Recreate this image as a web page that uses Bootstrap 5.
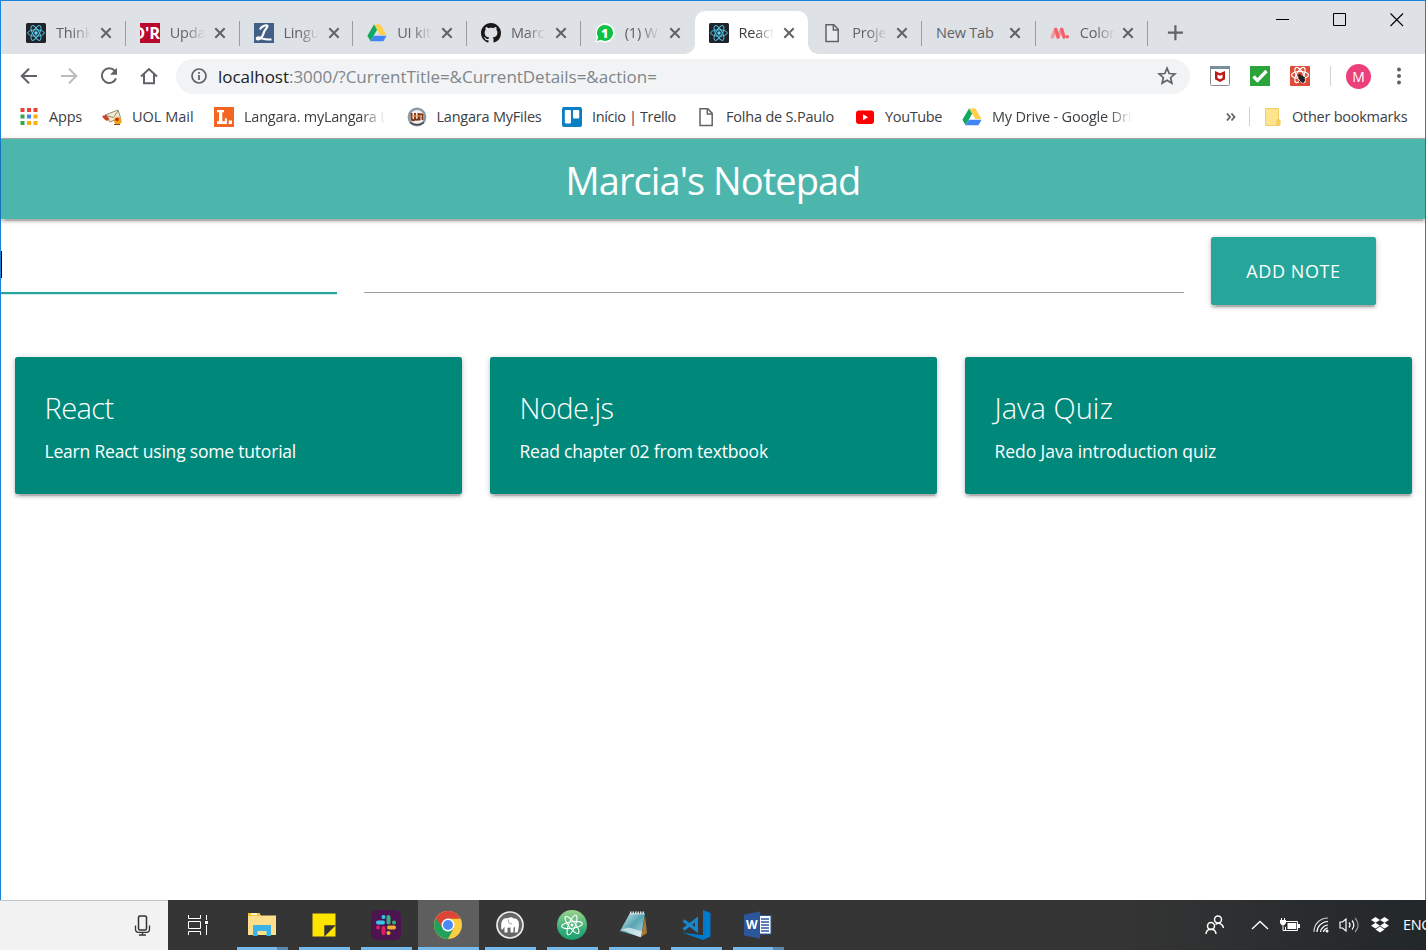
<!DOCTYPE html>
<html lang="en">
<head>
<meta charset="utf-8">
<meta name="viewport" content="width=device-width, initial-scale=1">
<title>Marcia's Notepad</title>
<link href="https://cdn.jsdelivr.net/npm/bootstrap@5.3.0/dist/css/bootstrap.min.css" rel="stylesheet">
<style>
body{font-family:"Open Sans","Noto Sans",sans-serif;height:950px;overflow:hidden;background:#fff}
svg{display:block;flex:none}
.window{height:900px;border:1px solid #1883d7;border-bottom:0}
/* tab strip */
.tabs-strip{height:53px;background:#dee1e6;padding:10px 0 0 11px}
.tab{width:113.75px;height:43px;padding-left:14px;flex:none;position:relative;font-size:14.5px;letter-spacing:-.2px;color:#5f6368}
.tab .label{width:35px;margin-left:10px;overflow:hidden;white-space:nowrap;line-height:24px;-webkit-mask-image:linear-gradient(90deg,#000 45%,transparent);mask-image:linear-gradient(90deg,#000 45%,transparent)}
.tab .label.full{width:68px;margin-left:0;-webkit-mask:none;mask:none}
.tab .x{margin-left:9px}
.tab.full-tab .x{margin-left:4.500px}
.tab.last{width:112px}
.tab.last .x{margin-left:7px}
.tab.sep::after{content:"";position:absolute;right:0;top:10px;width:1px;height:25px;background:#9a9da1}
.tab.on{background:#fff;border-radius:10px 10px 0 0;color:#3c4043}
.tab.on::before,.tab.on::after{content:"";position:absolute;bottom:0;width:10px;height:10px}
.tab.on::before{left:-10px;background:radial-gradient(circle at 0 0,transparent 9.5px,#fff 10px)}
.tab.on::after{right:-10px;background:radial-gradient(circle at 100% 0,transparent 9.5px,#fff 10px)}
.win-ctl{gap:43px;margin-right:21px;margin-top:2px}
/* toolbar */
.toolbar{height:44px;padding-left:18px}
.omni{width:1014px;height:35px;border-radius:18px;background:#f1f3f4;font-size:17px;color:#80868b;padding:0 13px;margin-left:17px}
.omni .url{margin-left:9px;letter-spacing:-.03px;white-space:nowrap;padding-top:1px}
.omni b{font-weight:400;color:#202124}
.ext{margin-left:20px}
.vr-line{width:1px;height:20px;background:#cfd1d4;margin:0 15px 0 20px}
.avatar{width:25px;height:25px;background:#ec407a;color:#fff;font:14px "Open Sans",sans-serif;margin-right:25px}
.dots{margin-right:23px}
/* bookmarks */
.marks{height:41px;border-bottom:1px solid #b1b1b1;padding:0 18px 3px 18px;font-size:14.5px;color:#3c4043}
.bm{gap:10px;margin-right:20px}
.bm span{white-space:nowrap;line-height:24px}
.bm .fade-end{overflow:hidden;-webkit-mask-image:linear-gradient(90deg,#000 82%,transparent 99%);mask-image:linear-gradient(90deg,#000 82%,transparent 99%)}
.marks-rule{width:1px;height:19px;background:#cfd1d4;margin:0 14px 0 13px}
/* page */
.z1{box-shadow:0 2.5px 2.5px 0 rgba(0,0,0,.14),0 4px 1px -2.5px rgba(0,0,0,.12),0 1px 6px 0 rgba(0,0,0,.2)}
.brandbar{height:80px;background:#4db6ac}
.brandbar h1{font-size:38px;line-height:80px;margin:0;padding-top:1px;letter-spacing:-.95px}
.note-form{padding-top:18px;height:138px;gap:27px}
.line-input{height:56px;border:0;border-bottom:1px solid #9e9e9e;border-radius:0;padding:0}
.line-input.cur{border-bottom:2px solid #26a69a;height:57px;box-shadow:0 .6px 0 #26a69a55}
.caret{position:absolute;left:0;top:14px;width:1px;height:27px;background:#000}
.btn-add{width:165px;height:68px;background:#26a69a;color:#fff;border:0;border-radius:2.5px;font-size:18px;letter-spacing:.6px;padding:0}
.note{height:137px;width:447px;background:#00897b;color:#fff;border:0;border-radius:2.5px;padding:30px 29.5px}
.note h2{font-size:29px;font-weight:300;line-height:42px;margin:0;letter-spacing:-.6px}
.note p{font-size:17.5px;line-height:28px;margin:8px 0 0;letter-spacing:-.2px;white-space:nowrap}
/* taskbar */
.taskbar{height:50px;background:#353535;overflow:hidden}
.search{width:168px;background:#f2f2f2;border-top:1px solid #c4c4c4;padding-right:17px}
.task{width:62px;height:50px;position:relative}
.task::after{content:"";position:absolute;left:6px;right:5px;bottom:0;height:3px;background:#76b9ed}
.task.on{background:linear-gradient(90deg,#353535 1px,#5e5e5e 1px)}
.task.on::after{left:1px;right:0}
.task.multi::after{background:linear-gradient(90deg,#76b9ed 40px,#5c87ab 40px)}
.tray{background:linear-gradient(90deg,#353535 50%,#22272a)}
</style>
</head>
<body>
<svg width="0" height="0" class="position-absolute">
  <symbol id="close" viewBox="0 0 12 12"><path d="M1.3 1.3l9.4 9.4M10.7 1.3l-9.4 9.4" stroke="#5f6368" stroke-width="2"/></symbol>
  <symbol id="react" viewBox="0 0 20 20"><rect width="20" height="20" rx="1.5" fill="#20232a"/><g fill="none" stroke="#53c1de" stroke-width="1"><ellipse cx="10" cy="10" rx="8.3" ry="3.2"/><ellipse cx="10" cy="10" rx="8.3" ry="3.2" transform="rotate(60 10 10)"/><ellipse cx="10" cy="10" rx="8.3" ry="3.2" transform="rotate(120 10 10)"/></g><circle cx="10" cy="10" r="1.7" fill="#61dafb"/></symbol>
  <symbol id="drive" viewBox="0 0 20 20"><path d="M7 1.4h6.3l6.2 10.7h-6.3z" fill="#ffcf48"/><path d="M7 1.4l3.1 5.4-6.5 11.4L.4 12.7z" fill="#11a861"/><path d="M6.8 12.7h12.8l-3.2 5.5H3.6z" fill="#4285f4"/></symbol>
  <symbol id="page" viewBox="0 0 20 20"><path d="M4 1.8h7.8l4.400 4.600v12H4z" fill="#fff" fill-opacity=".3" stroke="#5f6368" stroke-width="1.5"/><path d="M11.300 2v5h4.800" fill="none" stroke="#5f6368" stroke-width="1.4"/></symbol>
</svg>

<div class="window d-flex flex-column">
  <div class="tabs-strip d-flex">
    <div class="tab sep d-flex align-items-center"><svg width="20" height="20"><use href="#react"/></svg><span class="label">Thinking</span><svg class="x" width="12" height="12"><use href="#close"/></svg></div>
    <div class="tab sep d-flex align-items-center"><svg width="20" height="20"><rect width="20" height="20" fill="#b8082d"/><text x="-7" y="15.500" font-family="Open Sans" font-weight="700" font-size="16.500" fill="#fff">D'R</text></svg><span class="label">Update</span><svg class="x" width="12" height="12"><use href="#close"/></svg></div>
    <div class="tab sep d-flex align-items-center"><svg width="20" height="20"><rect width="20" height="20" fill="#425f85"/><path d="M6 6.500C7 3.500 12 1.500 13.300 2.600c1 1.500-2.300 3.400-3.300 6.400-.8 3-1.500 6-5 7.300-2 .5-3.200-1.300-1.200-1.800 3-.5 6 3 13.700 1.800" fill="none" stroke="#fff" stroke-width="2.200"/></svg><span class="label">Linguee</span><svg class="x" width="12" height="12"><use href="#close"/></svg></div>
    <div class="tab sep d-flex align-items-center"><svg width="20" height="20"><use href="#drive"/></svg><span class="label">UI kit -</span><svg class="x" width="12" height="12"><use href="#close"/></svg></div>
    <div class="tab sep d-flex align-items-center"><svg width="20" height="20" viewBox="0 0 16 16"><path fill="#191717" d="M8 0C3.580 0 0 3.580 0 8c0 3.540 2.290 6.530 5.470 7.590.4.070.55-.17.55-.38 0-.19-.01-.82-.01-1.490-2.010.37-2.530-.49-2.690-.94-.09-.23-.48-.94-.82-1.130-.28-.15-.68-.52-.01-.53.63-.01 1.080.58 1.230.82.72 1.210 1.870.87 2.330.66.070-.52.28-.87.51-1.070-1.780-.2-3.640-.89-3.640-3.950 0-.87.31-1.590.82-2.150-.08-.2-.36-1.020.08-2.120 0 0 .67-.21 2.200.82.64-.18 1.320-.27 2-.27s1.360.09 2 .27c1.530-1.040 2.200-.82 2.200-.82.44 1.100.16 1.920.08 2.120.51.56.82 1.270.82 2.150 0 3.070-1.870 3.750-3.650 3.950.29.25.54.73.54 1.480 0 1.070-.01 1.930-.01 2.200 0 .21.15.46.55.38A8.010 8.010 0 0 0 16 8c0-4.420-3.580-8-8-8z"/></svg><span class="label">Marcia</span><svg class="x" width="12" height="12"><use href="#close"/></svg></div>
    <div class="tab d-flex align-items-center"><svg width="20" height="20"><path d="M10 .3a9.600 9.600 0 1 1-4.500 18L.5 19.600l1.300-5A9.600 9.600 0 0 1 10 .3z" fill="#fff"/><path d="M10 1.900a8 8 0 1 1-4.200 14.800L2 17.900l1.200-3.800A8 8 0 0 1 10 1.900z" fill="#0dc143"/><text x="6" y="14.500" font-family="Open Sans" font-weight="800" font-size="12.500" fill="#fff">1</text></svg><span class="label">(1) WhatsApp</span><svg class="x" width="12" height="12"><use href="#close"/></svg></div>
    <div class="tab on d-flex align-items-center"><svg width="20" height="20"><use href="#react"/></svg><span class="label">React App</span><svg class="x" width="12" height="12"><use href="#close"/></svg></div>
    <div class="tab sep d-flex align-items-center"><svg width="20" height="20"><use href="#page"/></svg><span class="label">Project</span><svg class="x" width="12" height="12"><use href="#close"/></svg></div>
    <div class="tab sep full-tab d-flex align-items-center"><span class="label full">New Tab</span><svg class="x" width="12" height="12"><use href="#close"/></svg></div>
    <div class="tab sep last d-flex align-items-center"><svg width="20" height="20"><g stroke-linecap="round" stroke-width="3.400"><path d="M2.300 14L5.500 6.500M8 14l3.500-7.500" stroke="#f5999d"/><path d="M5.800 6.500L8 14M11.800 6.500L14 14" stroke="#f4606a"/></g><circle cx="17.300" cy="13.800" r="1.800" fill="#f4606a"/></svg><span class="label">Color Tool</span><svg class="x" width="12" height="12"><use href="#close"/></svg></div>
    <svg class="ms-3 mt-2" width="26" height="26"><path d="M11.400 6.200v15M3.900 13.700h15" stroke="#5f6368" stroke-width="2.200"/></svg>
    <div class="win-ctl d-flex ms-auto">
      <svg width="14" height="14"><path d="M0 6.500h13" stroke="#000"/></svg>
      <svg width="14" height="14"><path d="M.5.500h12v12H.500z" fill="none" stroke="#000" /></svg>
      <svg width="14" height="14"><path d="M.5.500l12.500 12.500M13 .5L.5 13" stroke="#000" stroke-width="1.100"/></svg>
    </div>
  </div>

  <div class="toolbar d-flex align-items-center">
    <div class="d-flex" style="gap:20px">
      <svg width="20" height="20"><path d="M18 10H3M10 2.700L2.700 10l7.300 7.300" fill="none" stroke="#5f6368" stroke-width="2"/></svg>
      <svg width="20" height="20"><path d="M2 10h15M10 2.700l7.300 7.300-7.300 7.300" fill="none" stroke="#babcbe" stroke-width="2"/></svg>
      <svg width="20" height="20"><path d="M15.800 5A7.300 7.300 0 1 0 17 12.300" fill="none" stroke="#5f6368" stroke-width="2"/><path d="M18 1.700v7h-7z" fill="#5f6368"/></svg>
      <svg width="20" height="20"><path d="M2 10.500L10 3l8 7.500M5 8.500v8.700h10V8.500" fill="none" stroke="#5f6368" stroke-width="2"/></svg>
    </div>
    <div class="omni d-flex align-items-center">
      <svg width="20" height="20"><circle cx="10" cy="10" r="7" fill="none" stroke="#5f6368" stroke-width="1.700"/><path d="M10 9v5M10 6v1.800" stroke="#5f6368" stroke-width="1.800"/></svg>
      <span class="url"><b>localhost</b>:3000/?CurrentTitle=&amp;CurrentDetails=&amp;action=</span>
      <svg class="ms-auto" width="20" height="20"><path d="M10 2.200l2.200 5.300 5.700.5-4.300 3.700 1.300 5.600-4.900-3-4.900 3 1.300-5.600L2.100 8l5.700-.5z" fill="none" stroke="#5f6368" stroke-width="1.700"/></svg>
    </div>
    <div class="d-flex align-items-center ms-auto">
      <svg width="20" height="20"><rect x=".5" y=".5" width="19" height="19" rx="1" fill="#fff" stroke="#8b8e90"/><path d="M0 0h20v3H0z" fill="#78909c"/><path d="M5 5l5 2.200L15 5v8.200L10 16l-5-2.800z" fill="#c01818"/><path d="M7.500 8.400l2.500 1.300 2.500-1.300v3.600L10 13.200 7.500 12z" fill="#fff"/></svg>
      <svg width="20" height="20" class="ext"><rect width="20" height="20" fill="#2aa43b"/><path d="M3.500 10.500l4 4L16.500 5" fill="none" stroke="#fff" stroke-width="3.300"/></svg>
      <svg width="20" height="20" class="ext"><rect width="20" height="20" rx="1" fill="#dd4b39"/><g fill="none" stroke="#fff" stroke-width="1.200"><ellipse cx="10" cy="9" rx="8.500" ry="3.500"/><ellipse cx="10" cy="9" rx="8.500" ry="3.500" transform="rotate(60 10 9)"/><ellipse cx="10" cy="9" rx="8.500" ry="3.500" transform="rotate(120 10 9)"/></g><ellipse cx="12" cy="13" rx="2.600" ry="3.600" fill="#222" transform="rotate(-35 12 13)"/><path d="M8 12l7 2.500M9 16l6-5M13 17v-7" stroke="#222"/><circle cx="9.500" cy="9.500" r="1.500" fill="#222"/></svg>
      <div class="vr-line"></div>
      <div class="avatar rounded-circle d-flex align-items-center justify-content-center">M</div>
      <svg width="6" height="20" class="dots"><g fill="#5f6368"><circle cx="3" cy="3.500" r="2"/><circle cx="3" cy="10" r="2"/><circle cx="3" cy="16.500" r="2"/></g></svg>
    </div>
  </div>

  <div class="marks d-flex align-items-center">
    <div class="bm d-flex align-items-center"><svg width="20" height="20"><g fill="#ea4335"><path d="M1.500 1h4v4h-4zM8 1h4v4H8zM14.500 1h4v4h-4z"/></g><path d="M1.500 7.500h4v4h-4zM1.500 14h4v4h-4z" fill="#34a853"/><path d="M8 7.500h4v4H8z" fill="#4285f4"/><path d="M14.500 7.500h4v4h-4zM8 14h4v4H8zM14.500 14h4v4h-4z" fill="#fbaf05"/></svg><span style="width:33px;letter-spacing:-.2px">Apps</span></div>
    <div class="bm d-flex align-items-center"><svg width="20" height="20"><path d="M3 8L16 3l2.500 7.500L8 15z" fill="#f2ead0" stroke="#8a8264" stroke-width=".9"/><path d="M4 8.500l7.500 2L16 4" fill="none" stroke="#8a8264" stroke-width=".9"/><path d="M0 9l4-1 3.500 4L5 14l-3-2z" fill="#c9452b"/><circle cx="15.800" cy="13.800" r="3.800" fill="#eda619"/><circle cx="15" cy="12.500" r="1.800" fill="#cf2418"/><path d="M12 17.500h6" stroke="#7b4d10"/></svg><span style="width:62px">UOL Mail</span></div>
    <div class="bm d-flex align-items-center"><svg width="20" height="20"><rect width="20" height="20" fill="#f36621"/><path d="M3 3h7v2.300H8.300v9h2.600v-3h2V17H3v-2.700h2V5.300H3zM14.700 13.500H18V17h-3.300z" fill="#fff"/></svg><span class="fade-end" style="width:142.500px;letter-spacing:-.25px">Langara. myLangara Login</span></div>
    <div class="bm d-flex align-items-center"><svg width="20" height="20"><circle cx="10" cy="10" r="8.200" fill="#f2efed" stroke="#8d9aa8" stroke-width="2.400"/><path d="M4.500 6v5c0 3 3.500 3 3.500 0V6M8 11c1 3 3.500 2 3.500 0V6M15.500 13V7.500c-2-1-3 0-3 2v4" fill="none" stroke="#7a3517" stroke-width="1.900"/><path d="M5 9h10" stroke="#ef9b43" stroke-width="1.200"/><path d="M3 15.500c4 3 10 3 14 0" fill="none" stroke="#444" stroke-width="1.500"/></svg><span style="width:105.500px;letter-spacing:-.22px">Langara MyFiles</span></div>
    <div class="bm d-flex align-items-center"><svg width="20" height="20"><rect width="20" height="20" rx="2" fill="#0b7fc4"/><rect x="2.800" y="3" width="6.200" height="13.500" rx="1" fill="#fff"/><rect x="11" y="3" width="6.200" height="8.500" rx="1" fill="#fff"/></svg><span style="width:84px;letter-spacing:-.38px">Início | Trello</span></div>
    <div class="bm d-flex align-items-center"><svg width="20" height="20"><use href="#page"/></svg><span style="width:109px;letter-spacing:-.2px">Folha de S.Paulo</span></div>
    <div class="bm d-flex align-items-center"><svg width="20" height="20"><rect x="1" y="3.500" width="18" height="13.500" rx="3" fill="#f00"/><path d="M8 7.300l5 3-5 3z" fill="#fff"/></svg><span style="width:57px;letter-spacing:-.35px">YouTube</span></div>
    <div class="bm d-flex align-items-center"><svg width="20" height="20"><use href="#drive"/></svg><span class="fade-end" style="width:142px;letter-spacing:-.2px">My Drive - Google Drive</span></div>
    <svg class="ms-auto" width="10" height="10"><path d="M1 1.500l3 3.500-3 3.500M5.500 1.500l3 3.500-3 3.500" fill="none" stroke="#5f6368" stroke-width="1.800"/></svg>
    <div class="marks-rule"></div>
    <svg width="18" height="20"><path d="M1.500 1.500h13v17h-13z" fill="#fde48d" stroke="#f0cf66"/><path d="M13 13h3v5h-3z" fill="#f9d656" stroke="#edc84f"/></svg>
    <span style="margin-left:10px;width:115px;letter-spacing:-.25px;white-space:nowrap">Other bookmarks</span>
  </div>

  <nav class="brandbar z1 text-white text-center"><h1 class="fw-normal">Marcia's Notepad</h1></nav>
  <form class="note-form d-flex align-items-start">
    <div class="position-relative" style="width:336px"><input class="form-control line-input cur" type="text" aria-label="Title"><i class="caret"></i></div>
    <input class="form-control line-input" style="width:820px" type="text" aria-label="Details">
    <button class="btn btn-add z1" type="button">ADD NOTE</button>
  </form>
  <main class="d-flex" style="gap:28px;padding-left:14px">
    <div class="card note z1"><h2>React</h2><p>Learn React using some tutorial</p></div>
    <div class="card note z1"><h2>Node.js</h2><p>Read chapter 02 from textbook</p></div>
    <div class="card note z1"><h2 style="letter-spacing:.05px">Java Quiz</h2><p style="letter-spacing:-.06px">Redo Java introduction quiz</p></div>
  </main>
</div>

<footer class="taskbar d-flex">
  <div class="search d-flex align-items-center justify-content-end"><svg width="17" height="22"><rect x="4.500" y="1" width="8" height="14" rx="1.500" fill="none" stroke="#333" stroke-width="1.500"/><path d="M1.500 10.500v3.500c0 2 1 3.300 3 3.300h8c2 0 3-1.300 3-3.300v-3.500M8.500 17.500v3M5 20h7" fill="none" stroke="#333" stroke-width="1.300"/></svg></div>
  <div class="d-flex align-items-center justify-content-center" style="width:63px;padding-right:3px"><svg width="22" height="20"><path d="M1.500 0v3.500h12V0M1.500 20v-3.500h12V20M1.500 6.500h12v7h-12zM19.500 0v5M19.500 10v10" fill="none" stroke="#fff"/><path d="M18 6h3v3h-3z" fill="#fff"/></svg></div>
  <div class="task multi d-flex align-items-center justify-content-center"><svg width="28" height="26"><path d="M0 2.500L1 1h10l2 2.500h15V23H0z" fill="#fddf8b"/><path d="M0 1h12v3H0z" fill="#f8c332"/><path d="M3 2.200h6" stroke="#fff" stroke-width="1.600"/><path d="M5 24V13h18v11h-4.500v-5h-9v5z" fill="#3ab3e8"/></svg></div>
  <div class="task d-flex align-items-center justify-content-center"><svg width="24" height="25"><path d="M.5.500h23v12h-11v11H.5z" fill="#ffe400"/><path d="M12.500 12.500h11l-11 11z" fill="#333"/><path d="M23.500 12.500v11h-11z" fill="#ffe400"/></svg></div>
  <div class="task d-flex align-items-center justify-content-center"><svg width="30" height="30"><rect width="30" height="30" rx="6" fill="#4c154f"/><g stroke-width="4" stroke-linecap="round"><path d="M7 12.500h5" stroke="#36c5f0"/><path d="M17.500 7v5.500" stroke="#2eb67d"/><path d="M18 17.500h5" stroke="#ecb22e"/><path d="M12.500 18v5" stroke="#e01e5a"/></g><g><circle cx="12.500" cy="7" r="2" fill="#36c5f0"/><circle cx="23" cy="12.500" r="2" fill="#2eb67d"/><circle cx="17.500" cy="23" r="2" fill="#ecb22e"/><circle cx="7" cy="17.500" r="2" fill="#e01e5a"/></g></svg></div>
  <div class="task on d-flex align-items-center justify-content-center"><svg width="28" height="28" viewBox="-14 -14 28 28"><circle r="14" fill="#fccd43"/><path d="M0 0L-12.100-7A14 14 0 0 0 0 14L5.600 3.200z" fill="#21a15b"/><path d="M-12.100-7A14 14 0 0 1 12.500-6.300H0L-5.600 3z" fill="#dc4437"/><circle r="6.500" fill="#fff"/><circle r="5" fill="#4a8af4"/></svg></div>
  <div class="task d-flex align-items-center justify-content-center"><svg width="28" height="28"><circle cx="14" cy="14" r="13" fill="#666" stroke="#eee" stroke-width="1.700"/><path d="M5.300 17.500C4.500 10 7 6.500 11.500 7.300c2-1.300 5-1.300 6 .2 4-.8 6 3 5.300 7.500-.2 3-.8 5-1.300 6.500h-2.700l.2-6-1.500 1.500v4.500h-3v-5l-3 .2v4.800H8.500v-6l-1.500 2.500c-.5 1-1.500 1-1.700-.5z" fill="#fff"/><path d="M12.500 8.500c-.5 3 .5 4.500 3.500 4.500" stroke="#888" stroke-width=".8" fill="none"/></svg></div>
  <div class="task d-flex align-items-center justify-content-center"><svg width="30" height="30"><defs><linearGradient id="atom" x2="0" y2="1"><stop stop-color="#9cd28c"/><stop offset=".65" stop-color="#36ad78"/><stop offset="1" stop-color="#16a06f"/></linearGradient></defs><circle cx="15" cy="15" r="15" fill="url(#atom)"/><g fill="none" stroke="#fff" stroke-width="1.100"><ellipse cx="15" cy="15" rx="10.500" ry="3.300" transform="rotate(-8 15 15)"/><ellipse cx="15" cy="15" rx="10.500" ry="3.300" transform="rotate(52 15 15)"/><ellipse cx="15" cy="15" rx="10.500" ry="3.300" transform="rotate(112 15 15)"/></g><circle cx="15" cy="15" r="1.500" fill="#fff"/></svg></div>
  <div class="task d-flex align-items-center justify-content-center"><svg width="30" height="30"><defs><linearGradient id="pad" x2="1" y2="1"><stop stop-color="#d7edf0"/><stop offset=".5" stop-color="#58a5b3"/><stop offset="1" stop-color="#b6dfe6"/></linearGradient></defs><path d="M26 6l2 17-6 4z" fill="#a77a35"/><path d="M11 3h15l-4 24L1 21z" fill="url(#pad)"/><path d="M2 19.500l8-2 13 4-1.500 6z" fill="#e8f4f5" opacity=".7"/><path d="M11 3h15" stroke="#ddd" stroke-width="3" stroke-dasharray="1.500 1"/></svg></div>
  <div class="task d-flex align-items-center justify-content-center"><svg width="30" height="30"><path d="M22 0l7.500 3v23.500L22 30 1 22.500l21 2.700z" fill="#007acc"/><path d="M2.500 10.500l13 9.500V9.500L2.500 19.500" fill="none" stroke="#1687cf" stroke-width="3"/></svg></div>
  <div class="task multi d-flex align-items-center justify-content-center"><svg width="28" height="28"><path d="M15 4.500h12v18.500H15z" fill="#fff" stroke="#2b579a"/><path d="M17 8h8M17 11h8M17 14h8M17 17h8M17 20h8" stroke="#2b579a" stroke-width="1.300"/><path d="M0 3.500L16 .5v27L0 24.500z" fill="#2b579a"/><text x="2" y="18" font-family="Open Sans" font-weight="700" font-size="12" fill="#fff">W</text></svg></div>
  <div class="tray d-flex align-items-center flex-grow-1 text-white">
    <svg class="ms-auto" width="20" height="20"><g fill="none" stroke="#fff" stroke-width="1.500"><circle cx="13" cy="4.500" r="3.500"/><circle cx="6" cy="11" r="3.500"/><path d="M1 19c.3-6.500 9.700-6.500 10 0M10.500 9.500c3.500-2.500 7.500-.5 8 3.500"/></g></svg>
    <svg width="18" height="10" style="margin-left:26px"><path d="M1 9l8-7.500L17 9" fill="none" stroke="#fff" stroke-width="1.400"/></svg>
    <svg width="20" height="14" style="margin-left:11px"><path d="M5 3.500h12.500v9h-12V9" fill="none" stroke="#fff"/><path d="M7.500 5h8.800v6H7.500zM18 6h2v4h-2z" fill="#fff"/><path d="M1.500 0v2M4.500 0v2M3 7v5.500h3" stroke="#fff" fill="none"/><path d="M0 2h6v3L4.500 7h-3L0 5z" fill="#fff"/></svg>
    <svg width="16" height="16" style="margin-left:13px"><g fill="none" stroke="#fff" stroke-width="1.200"><path d="M1 15C1 7 7 1 15 1" opacity=".75"/><path d="M4 15C4 9.500 9 4.500 15 4.500M7.500 15c0-3.500 4-7 7.500-7M10.500 15c0-2 2.500-4 4.500-4"/></g><circle cx="14" cy="14" r="1.500" fill="#fff"/></svg>
    <svg width="21" height="18" style="margin-left:10px"><g fill="none" stroke="#fff" stroke-width="1.200"><path d="M1 6h2.500L7 3v12l-3.500-3H1z"/><path d="M10 6.500c1.300 1.500 1.300 3.500 0 5M13 4.500c2.500 3 2.500 6 0 9"/><path d="M16 2c4 4.500 4 9.500 0 14" opacity=".5"/></g></svg>
    <svg width="18" height="16" style="margin-left:11px"><path d="M4.500 0L9 2.900 4.500 5.800 0 2.900zM13.500 0L18 2.900l-4.500 2.900L9 2.900zM4.500 5.800L9 8.700l-4.500 2.900L0 8.700zM13.500 5.800L18 8.700l-4.500 2.900L9 8.700zM9 9.600l4.500 2.900L9 15.400l-4.500-2.900z" fill="#fff"/></svg>
    <div style="margin-left:14px;width:23px;overflow:hidden;white-space:nowrap;font-size:14.500px;letter-spacing:-.3px">ENG</div>
  </div>
</footer>
<script src="https://cdn.jsdelivr.net/npm/bootstrap@5.3.0/dist/js/bootstrap.bundle.min.js"></script>
</body>
</html>
